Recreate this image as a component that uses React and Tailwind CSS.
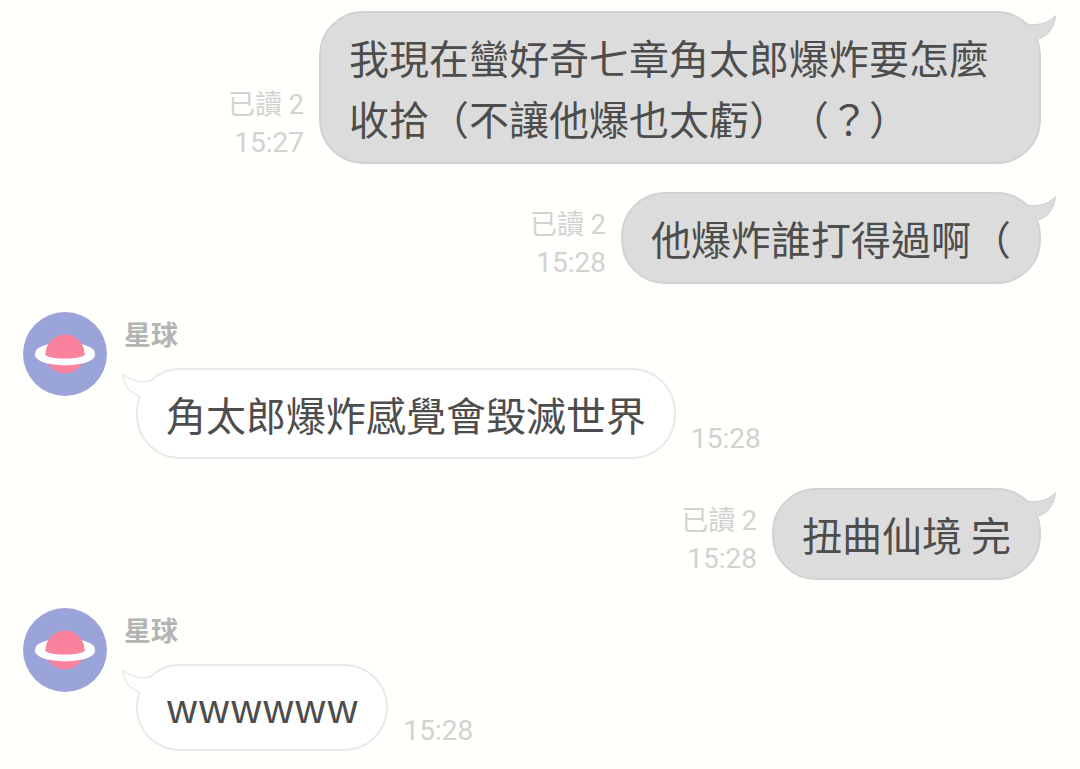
const messages = [
  { id: 1, own: true, read: 2, time: '15:27', text: '我現在蠻好奇七章角太郎爆炸要怎麼收拾（不讓他爆也太虧）（？）' },
  { id: 2, own: true, read: 2, time: '15:28', text: '他爆炸誰打得過啊（' },
  { id: 3, own: false, name: '星球', time: '15:28', text: '角太郎爆炸感覺會毀滅世界' },
  { id: 4, own: true, read: 2, time: '15:28', text: '扭曲仙境 完' },
  { id: 5, own: false, name: '星球', time: '15:28', text: 'wwwwww', latin: true },
];

function Avatar() {
  return (
    <svg viewBox="0 0 84 84" className="size-[84px] shrink-0" aria-hidden="true">
      <circle cx="42" cy="42" r="42" fill="#9ba4d9" />
      <ellipse cx="42" cy="42" rx="26" ry="7.2" fill="none" stroke="#fff" strokeWidth="8" />
      <circle cx="42" cy="42" r="19.5" fill="#f9839e" />
      <path
        d="M12 42C12 48.6 25.4 53.2 42 53.2S72 48.6 72 42L62.5 42.5C59 45.5 51 46.6 42 46.6S25 45.5 21.5 42.5Z"
        fill="#fff"
      />
    </svg>
  );
}

function OwnTail() {
  return (
    <svg viewBox="0 0 36 32" className="absolute -top-0.5 -right-[18px] h-8 w-9" aria-hidden="true">
      <path d="M3 15L6.5 13C18 15 28 12 34.5 5C33.5 16 27 25 17.8 28L14 28Z" fill="#dcdcdc" />
      <path d="M6 13C18 15 28 12 34.5 5C33.5 16 27 25 17.8 28" fill="none" stroke="#d2d2d3" strokeWidth="1.2" strokeLinejoin="round" />
    </svg>
  );
}

function OtherTail() {
  return (
    <svg viewBox="0 0 36 32" className="absolute -top-0.5 -left-[18px] h-8 w-9" aria-hidden="true">
      <path d="M34 15L30.5 13C19 15 9 12 2.5 6C3 16 10 25 19.2 28L23 28Z" fill="#fff" />
      <path d="M31 13C19 15 9 12 2.5 6C3 16 10 25 19.2 28" fill="none" stroke="#e9e9eb" strokeWidth="1.5" strokeLinejoin="round" />
    </svg>
  );
}

function OwnMessage({ message }) {
  return (
    <li className="flex items-end justify-end gap-[15px]">
      <div className="shrink-0 pb-[3px] text-right font-[Roboto,'Noto_Sans_CJK_TC',sans-serif] leading-[37px] text-[#d2d2d2]">
        <p className="text-[27px]">已讀 {message.read}</p>
        <time className="block text-[28px]">{message.time}</time>
      </div>
      <div className="relative max-w-[722px] rounded-[44px] border-2 border-[#d2d2d3] bg-[#dcdcdc] px-7 pt-3.5 pb-[13px]">
        <OwnTail />
        <p className="relative text-[40px] leading-[61px]">{message.text}</p>
      </div>
    </li>
  );
}

function OtherMessage({ message }) {
  return (
    <li className="flex items-start gap-[17px] pb-px">
      <Avatar />
      <div>
        <h2 className="mb-3 text-[27px] leading-[44px] font-bold text-[#b4b4b4]">{message.name}</h2>
        <div className="flex items-end gap-[15px] pl-3">
          <div className="relative max-w-[722px] rounded-[44px] border-2 border-[#e9e9eb] bg-white px-7 pt-3.5 pb-[13px]">
            <OtherTail />
            <p className={message.latin ? 'relative pb-1 text-[40px] leading-[52px]' : 'relative text-[40px] leading-[60px]'}>
              {message.text}
            </p>
          </div>
          <time className="pb-0.5 font-[Roboto,sans-serif] text-[28px] leading-[37px] text-[#d2d2d2]">{message.time}</time>
        </div>
      </div>
    </li>
  );
}

export default function App() {
  return (
    <main
      lang="zh-Hant"
      className="min-h-screen bg-[#fffffc] font-['Noto_Sans_CJK_TC',sans-serif] text-[#4d4d4d] [text-spacing-trim:space-all]"
    >
      <ol className="flex flex-col gap-7 pt-[11px] pr-[39px] pb-4 pl-[23px]">
        {messages.map((message) =>
          message.own ? (
            <OwnMessage key={message.id} message={message} />
          ) : (
            <OtherMessage key={message.id} message={message} />
          ),
        )}
      </ol>
    </main>
  );
}
